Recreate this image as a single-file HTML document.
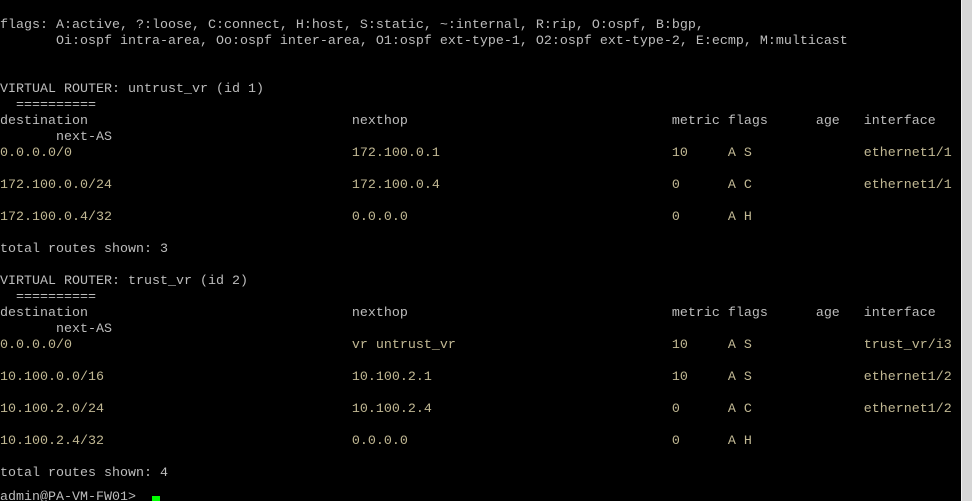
<!DOCTYPE html>
<html><head><meta charset="utf-8">
<style>
html,body{margin:0;padding:0;background:#000;width:972px;height:501px;overflow:hidden;position:relative}
pre{position:absolute;left:0;top:18px;margin:0;font-family:"Liberation Mono",monospace;font-size:13.33px;line-height:16px;color:#bdbdbd;white-space:pre}
.d{color:#c2b994}
#pr{top:490px}
#sb{position:absolute;left:961px;top:0;width:11px;height:501px;background:#d6d6d6;border-left:1px solid #efefef}
#cur{position:absolute;left:152px;top:496px;width:8px;height:5px;background:#00ff00}
</style></head><body>
<pre>flags: A:active, ?:loose, C:connect, H:host, S:static, ~:internal, R:rip, O:ospf, B:bgp,
       Oi:ospf intra-area, Oo:ospf inter-area, O1:ospf ext-type-1, O2:ospf ext-type-2, E:ecmp, M:multicast


VIRTUAL ROUTER: untrust_vr (id 1)
  ==========
destination                                 nexthop                                 metric flags      age   interface
       next-AS
<span class="d">0.0.0.0/0                                   172.100.0.1                             10     A S              ethernet1/1</span>

<span class="d">172.100.0.0/24                              172.100.0.4                             0      A C              ethernet1/1</span>

<span class="d">172.100.0.4/32                              0.0.0.0                                 0      A H</span>

total routes shown: 3

VIRTUAL ROUTER: trust_vr (id 2)
  ==========
destination                                 nexthop                                 metric flags      age   interface
       next-AS
<span class="d">0.0.0.0/0                                   vr untrust_vr                           10     A S              trust_vr/i3</span>

<span class="d">10.100.0.0/16                               10.100.2.1                              10     A S              ethernet1/2</span>

<span class="d">10.100.2.0/24                               10.100.2.4                              0      A C              ethernet1/2</span>

<span class="d">10.100.2.4/32                               0.0.0.0                                 0      A H</span>

total routes shown: 4</pre>
<pre id="pr">admin@PA-VM-FW01> </pre>
<div id="cur"></div>
<div id="sb"></div>
</body></html>
